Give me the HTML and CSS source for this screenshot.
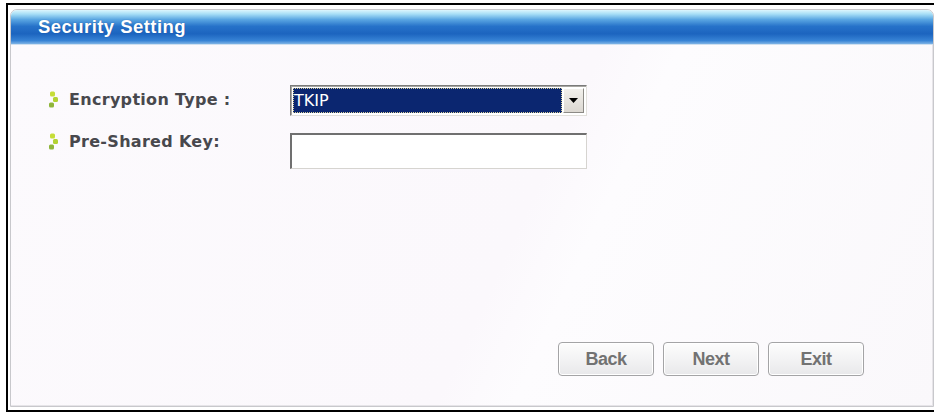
FILE: index.html
```html
<!DOCTYPE html>
<html>
<head>
<meta charset="utf-8">
<title>Security Setting</title>
<link rel="stylesheet" href="styles.css">
</head>
<body>
<div class="frame">
  <div class="panel">
    <div class="panel-header">Security Setting</div>
    <div class="panel-body">
      <div class="field field-type">
        <div class="label">
          <svg class="bullet" width="9" height="20" viewBox="0 0 9 20"><rect x="1" y="1.5" width="5" height="5" rx="1.5" fill="#c6dd38"/><rect x="4" y="7" width="5" height="5" rx="1.5" fill="#b3d233"/><rect x="0" y="12.5" width="5" height="5" rx="1.5" fill="#8fb53a"/></svg>
          <span>Encryption Type :</span>
        </div>
        <div class="select">
          <span class="select-value">TKIP</span>
          <span class="select-btn"><svg width="9" height="5" viewBox="0 0 9 5"><path d="M0 0H9L4.5 5Z" fill="#000"/></svg></span>
        </div>
      </div>
      <div class="field field-key">
        <div class="label">
          <svg class="bullet" width="9" height="20" viewBox="0 0 9 20"><rect x="1" y="1.5" width="5" height="5" rx="1.5" fill="#c6dd38"/><rect x="4" y="7" width="5" height="5" rx="1.5" fill="#b3d233"/><rect x="0" y="12.5" width="5" height="5" rx="1.5" fill="#8fb53a"/></svg>
          <span>Pre-Shared Key:</span>
        </div>
        <input class="text-input" type="text" value="">
      </div>
    </div>
    <div class="actions">
      <button class="btn">Back</button>
      <button class="btn">Next</button>
      <button class="btn">Exit</button>
    </div>
  </div>
</div>
</body>
</html>
```
FILE: styles.css
```css
html, body {
  margin: 0;
  padding: 0;
  background: #ffffff;
}

.frame {
  margin: 3px 0 0 6px;
  box-sizing: border-box;
  width: 928px;
  height: 409px;
  border-top: 2px solid #000;
  border-left: 2px solid #000;
  border-bottom: 2px solid #000;
  padding: 4px 0 3px 2px;
}

.panel {
  box-sizing: border-box;
  height: 398px;
  width: 924px;
  border: 1px solid #c8c8cc;
  border-radius: 7px 7px 0 0;
  overflow: hidden;
  background: linear-gradient(115deg, #fcfafd 0%, #fbf8fc 55%, #fdfcfe 62%, #faf8fb 100%);
  display: flex;
  flex-direction: column;
  box-shadow: inset -1px -1px 0 #e6e4e8;
}

.panel-header {
  height: 35px;
  flex-shrink: 0;
  box-sizing: border-box;
  padding-left: 27px;
  line-height: 33px;
  font-family: "Liberation Sans", Arial, sans-serif;
  font-weight: bold;
  font-size: 18.5px;
  letter-spacing: 0.45px;
  color: #ffffff;
  text-shadow: 0 0 1px rgba(20, 60, 120, 0.6);
  background: linear-gradient(to bottom,
    #dcf6fd 0%,
    #a6def6 12%,
    #5aa6e2 28%,
    #2672c9 48%,
    #1c64bf 70%,
    #3783d5 90%,
    #7fb4e6 100%);
  border-bottom: 1px solid #cfe0f0;
}

.panel-body {
  flex: 1;
  padding: 40px 0 0 38px;
  font-family: "DejaVu Sans", Verdana, sans-serif;
}

.field {
  display: flex;
  align-items: flex-start;
}

.field-type {
  height: 31px;
  margin-bottom: 17px;
}

.field-type .label {
  margin-top: 5px;
}

.field-key .label {
  margin-top: -1px;
}

.label {
  width: 241px;
  flex-shrink: 0;
  display: flex;
  align-items: flex-start;
  line-height: 20px;
  font-weight: bold;
  font-size: 16px;
  letter-spacing: 0.3px;
  color: #48484d;
}

.bullet {
  flex-shrink: 0;
  margin-right: 11px;
}

.select {
  box-sizing: border-box;
  width: 297px;
  height: 31px;
  display: flex;
  padding: 2px;
  border-top: 1px solid #7a7a7a;
  border-left: 1px solid #7a7a7a;
  border-right: 1px solid #e2e0dc;
  border-bottom: 1px solid #e2e0dc;
  box-shadow: inset 1px 1px 0 #a8a6a2;
  background: #ffffff;
}

.select-value {
  flex: 1;
  background: #0b2670;
  outline: 1px dotted #d8cf9a;
  outline-offset: -1px;
  color: #ffffff;
  font-family: "DejaVu Sans", Tahoma, sans-serif;
  font-size: 16px;
  line-height: 25px;
  padding-left: 1px;
  margin: 0 1px 0 0;
}

.select-btn {
  width: 21px;
  box-sizing: border-box;
  display: flex;
  align-items: center;
  justify-content: center;
  background: linear-gradient(to bottom, #f2f0ec, #dcd8d2);
  border-top: 1px solid #ffffff;
  border-left: 1px solid #ffffff;
  border-right: 1px solid #8c8a86;
  border-bottom: 1px solid #8c8a86;
}

.text-input {
  box-sizing: border-box;
  width: 297px;
  height: 36px;
  margin: 0;
  padding: 0;
  background: #ffffff;
  border-top: 2px solid #707070;
  border-left: 2px solid #707070;
  border-right: 1px solid #d6d4d0;
  border-bottom: 1px solid #d6d4d0;
  outline: none;
}

.actions {
  flex-shrink: 0;
  display: flex;
  justify-content: flex-end;
  gap: 9px;
  padding: 0 69px 30px 0;
}

.btn {
  box-sizing: border-box;
  width: 96px;
  height: 34px;
  margin: 0;
  padding: 0;
  border: 1px solid #a4a4a6;
  border-radius: 4px;
  background: linear-gradient(to bottom, #fdfdfd 0%, #f3f3f4 50%, #e8e8ea 100%);
  box-shadow: inset 0 0 0 1px #ffffff;
  font-family: "Liberation Sans", Arial, sans-serif;
  font-weight: bold;
  font-size: 18px;
  letter-spacing: -0.5px;
  color: #727272;
}
```
